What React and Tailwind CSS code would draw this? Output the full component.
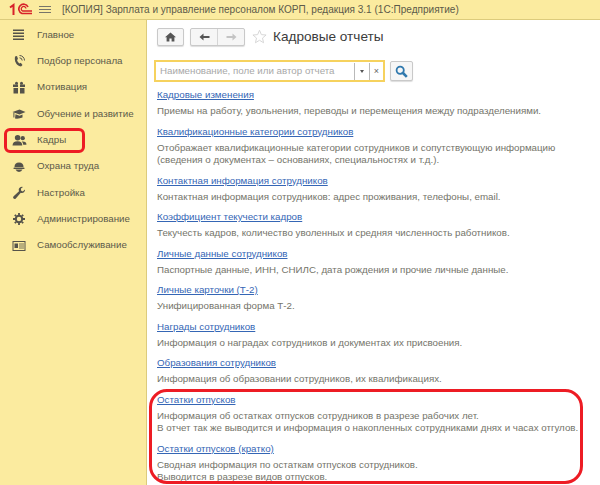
const menu = [
    { name: 'Главное', icon: 'main' },
    { name: 'Подбор персонала', icon: 'phone' },
    { name: 'Мотивация', icon: 'gift' },
    { name: 'Обучение и развитие', icon: 'cap' },
    { name: 'Кадры', icon: 'people' },
    { name: 'Охрана труда', icon: 'helmet' },
    { name: 'Настройка', icon: 'wrench' },
    { name: 'Администрирование', icon: 'gear' },
    { name: 'Самообслуживание', icon: 'card' },
]

const reports = [
    { title: 'Кадровые изменения', lines: ['Приемы на работу, увольнения, переводы и перемещения между подразделениями.'] },
    { title: 'Квалификационные категории сотрудников', lines: ['Отображает квалификационные категории сотрудников и сопутствующую информацию', '(сведения о документах – основаниях, специальностях и т.д.).'] },
    { title: 'Контактная информация сотрудников', lines: ['Контактная информация сотрудников: адрес проживания, телефоны, email.'] },
    { title: 'Коэффициент текучести кадров', lines: ['Текучесть кадров, количество уволенных и средняя численность работников.'] },
    { title: 'Личные данные сотрудников', lines: ['Паспортные данные, ИНН, СНИЛС, дата рождения и прочие личные данные.'] },
    { title: 'Личные карточки (Т-2)', lines: ['Унифицированная форма Т-2.'] },
    { title: 'Награды сотрудников', lines: ['Информация о наградах сотрудников и документах их присвоения.'] },
    { title: 'Образования сотрудников', lines: ['Информация об образовании сотрудников, их квалификациях.'] },
    { title: 'Остатки отпусков', lines: ['Информация об остатках отпусков сотрудников в разрезе рабочих лет.', 'В отчет так же выводится и информация о накопленных сотрудниками днях и часах отгулов.'] },
    { title: 'Остатки отпусков (кратко)', lines: ['Сводная информация по остаткам отпусков сотрудников.', 'Выводится в разрезе видов отпусков.'] },
]

function MenuIcon({ type }) {
    const c = '#55534a'
    if (type === 'main') {
        return (
            <svg width="14" height="14" viewBox="0 0 14 14" fill={c}>
                <rect x="1" y="1.5" width="11" height="1.5" />
                <rect x="1" y="4.5" width="11" height="1.5" />
                <rect x="1" y="7.5" width="11" height="1.5" />
                <rect x="1" y="10.5" width="11" height="1.5" />
            </svg>
        )
    }
    if (type === 'phone') {
        return (
            <svg width="14" height="14" viewBox="0 0 14 14" fill="none" stroke={c}>
                <path d="M3 2.5 L5 2 L6 5 L5 6 Q5.5 8 7.5 9.5 L8.8 8.8 L10.5 11 L9 12.5 Q5 12 3.2 7.5 Q2.5 5 3 2.5Z" fill={c} stroke="none" />
                <path d="M7.5 1.5 A5 5 0 0 1 12.5 6.5 M7.5 3.8 A2.8 2.8 0 0 1 10.2 6.5" />
            </svg>
        )
    }
    if (type === 'gift') {
        return (
            <svg width="14" height="14" viewBox="0 0 14 14" fill={c}>
                <rect x="1" y="3.5" width="5" height="2.5" />
                <rect x="8" y="3.5" width="5" height="2.5" />
                <rect x="1.5" y="7" width="4.5" height="5.5" />
                <rect x="8" y="7" width="4.5" height="5.5" />
                <circle cx="4.5" cy="2.3" r="1.5" />
                <circle cx="9.5" cy="2.3" r="1.5" />
            </svg>
        )
    }
    if (type === 'cap') {
        return (
            <svg width="14" height="14" viewBox="0 0 14 14" fill={c}>
                <path d="M0.5 5 L7.5 2.5 L13.5 5 L7.5 7.5Z" />
                <path d="M3.5 7.2 L7.5 8.8 L10.5 7.4 V10.5 Q7 12 3 11.5Z" />
                <rect x="1.4" y="5.5" width="1" height="5" />
            </svg>
        )
    }
    if (type === 'people') {
        return (
            <svg width="15" height="13" viewBox="0 0 16 14" fill={c}>
                <circle cx="6" cy="4" r="3" />
                <path d="M0.5 12.5 Q0.5 7.8 6 7.8 Q11 7.8 11 12.5Z" />
                <circle cx="11.5" cy="4.5" r="2.3" />
                <path d="M10.5 8 Q15.5 7.5 15.5 11.5 H12 Q12 9.5 10.5 8Z" />
            </svg>
        )
    }
    if (type === 'helmet') {
        return (
            <svg width="14" height="14" viewBox="0 0 14 14" fill={c}>
                <path d="M2.5 7 Q2.5 2.5 7 2.5 Q11.5 2.5 11.5 7Z" />
                <rect x="1.5" y="7.6" width="11" height="1.5" rx="0.7" />
                <path d="M3.5 9.6 H10.5 Q9.5 12 7 12 Q4.5 12 3.5 9.6Z" />
            </svg>
        )
    }
    if (type === 'wrench') {
        return (
            <svg width="14" height="14" viewBox="0 0 14 14" fill={c}>
                <path d="M13 3.6 L10.8 5.4 L9 4.6 L9 2.6 L11 1 Q8.2 0.4 7 2.6 Q6.4 4 7 5.2 L1.4 10.4 Q0.6 11.6 1.6 12.6 Q2.8 13.4 3.8 12.4 L8.8 6.8 Q10.6 7.4 12 6.2 Q13.4 5 13 3.6Z" />
            </svg>
        )
    }
    if (type === 'gear') {
        return (
            <svg width="14" height="14" viewBox="0 0 14 14" fill="none" stroke={c}>
                <circle cx="7" cy="7" r="3.2" strokeWidth="2" />
                <path strokeWidth="1.8" d="M7 1 V3 M7 11 V13 M1 7 H3 M11 7 H13 M2.8 2.8 L4.2 4.2 M9.8 9.8 L11.2 11.2 M2.8 11.2 L4.2 9.8 M9.8 4.2 L11.2 2.8" />
            </svg>
        )
    }
    return (
        <svg width="14" height="14" viewBox="0 0 14 14" fill="none" stroke={c}>
            <rect x="1" y="2.5" width="12" height="9" />
            <rect x="2.5" y="4.5" width="3.5" height="4.5" fill={c} stroke="none" />
            <path d="M7 5 H12 M7 7 H12 M7 9 H12" strokeWidth="0.8" />
        </svg>
    )
}

function Logo() {
    return (
        <svg width="24" height="14" viewBox="0 0 24 14" fill="none">
            <path d="M1 4.5 L4.5 2 V12" stroke="#d8232a" strokeWidth="2" />
            <path d="M19 4 A4.8 4.8 0 1 0 13 10.5 H23" stroke="#d8232a" strokeWidth="1.7" />
            <path d="M17 5.5 A2.4 2.4 0 1 0 13.5 8 H23" stroke="#d8232a" strokeWidth="1.3" />
        </svg>
    )
}

export default function App() {
    return (
        <div className="relative flex h-[485px] w-[600px] flex-col overflow-hidden bg-white font-['Liberation_Sans',sans-serif] text-[9.75px]">
            <header className="flex h-[20px] shrink-0 items-center border-b border-[#dccb7c] bg-[#fbeb9f] pl-[9px] text-[#5c5a4a]">
                <Logo />
                <div className="ml-[6px] flex w-[12px] flex-col gap-[2px]">
                    <span className="h-px bg-[#77756a]" />
                    <span className="h-px bg-[#77756a]" />
                    <span className="h-px bg-[#77756a]" />
                </div>
                <span className="ml-[11px] whitespace-nowrap text-[10.05px]">[КОПИЯ] Зарплата и управление персоналом КОРП, редакция 3.1 (1С:Предприятие)</span>
            </header>

            <div className="flex min-h-0 flex-1">
                <aside className="w-[147px] shrink-0 border-r border-[#dccb7c] bg-[#fbeb9f] pt-[2px] text-[#5c5a4a]">
                    <ul>
                        {menu.map((item) => (
                            <li key={item.name} className="flex h-[26.3px] items-center pl-[12px]">
                                <span className="flex w-[25px] shrink-0"><MenuIcon type={item.icon} /></span>
                                <span className="whitespace-nowrap">{item.name}</span>
                            </li>
                        ))}
                    </ul>
                </aside>

                <main className="min-w-0 flex-1 pl-[10px] pt-[7px]">
                    <div className="flex h-[19px] items-center">
                        <button className="flex h-[18px] w-[27px] items-center justify-center rounded-[2px] border border-[#c9c9c9] bg-[#f6f6f6] shadow-[0_1px_1px_#ddd]">
                            <svg width="11" height="10" viewBox="0 0 11 10" fill="#555"><path d="M5.5 0.5 L11 5.3 H9.4 V9.5 H6.6 V6.5 H4.4 V9.5 H1.6 V5.3 H0Z" /></svg>
                        </button>
                        <div className="ml-[6px] flex h-[18px] w-[55px] rounded-[2px] border border-[#c9c9c9] bg-[#f6f6f6] shadow-[0_1px_1px_#ddd]">
                            <span className="flex flex-1 items-center justify-center border-r border-[#d5d5d5]">
                                <svg width="11" height="8" viewBox="0 0 11 8" fill="#555"><path d="M0.5 4 L4.5 0.5 V3 H10.5 V5 H4.5 V7.5Z" /></svg>
                            </span>
                            <span className="flex flex-1 items-center justify-center">
                                <svg width="11" height="8" viewBox="0 0 11 8" fill="#c4c4c4"><path d="M10.5 4 L6.5 0.5 V3 H0.5 V5 H6.5 V7.5Z" /></svg>
                            </span>
                        </div>
                        <svg className="ml-[7px]" width="15" height="15" viewBox="0 0 24 24" fill="none" stroke="#d4d4d4" strokeWidth="1.5"><path d="M12 2 L15 9 L22.5 9.6 L16.8 14.5 L18.5 22 L12 18 L5.5 22 L7.2 14.5 L1.5 9.6 L9 9Z" /></svg>
                        <h1 className="ml-[6px] whitespace-nowrap pt-[1px] text-[13.6px] text-[#3c3c3c]">Кадровые отчеты</h1>
                    </div>

                    <div className="ml-[-3px] mt-[14px] flex h-[22px] items-center">
                        <div className="flex h-[22px] w-[231px] items-center border-2 border-[#f6d25e] pl-[4px] text-[#a8a8a8]">
                            <span className="flex-1 whitespace-nowrap">Наименование, поле или автор отчета</span>
                            <span className="flex h-[17px] w-[15px] items-center justify-center border-l border-[#b9b9b9]">
                                <span className="border-x-[2.5px] border-t-[3px] border-x-transparent border-t-[#555]" />
                            </span>
                            <span className="flex h-[17px] w-[14px] items-center justify-center border-l border-[#b9b9b9] text-[9px] leading-none text-[#666]">×</span>
                        </div>
                        <button className="ml-[5px] flex h-[20px] w-[23px] items-center justify-center rounded-[2px] border border-[#c9c9c9] bg-[#f6f6f6] shadow-[0_1px_1px_#ddd]">
                            <svg width="13" height="13" viewBox="0 0 13 13" fill="none" stroke="#2f78ad"><circle cx="5.2" cy="5.2" r="3.6" strokeWidth="1.8" /><path d="M8 8 L11.8 11.8" strokeWidth="2.6" /></svg>
                        </button>
                    </div>

                    <div className="mt-[6px] flex flex-col gap-[7px]">
                        {reports.map((report) => (
                            <article key={report.title}>
                                <a href="#" className="block h-[14px] whitespace-nowrap leading-[14px] text-[#3566b5] underline">{report.title}</a>
                                <div className="mt-[3px] leading-[12.5px] text-[#74746a]">
                                    {report.lines.map((line) => (
                                        <p key={line} className="whitespace-nowrap">{line}</p>
                                    ))}
                                </div>
                            </article>
                        ))}
                    </div>
                </main>
            </div>

            <div className="absolute left-[4px] top-[128px] h-[25px] w-[81px] rounded-[6px] border-[3px] border-[#ed1c24]" />
            <div className="absolute left-[149px] top-[389px] h-[95px] w-[434px] rounded-[18px] border-[3px] border-[#ed1c24]" />
        </div>
    )
}
